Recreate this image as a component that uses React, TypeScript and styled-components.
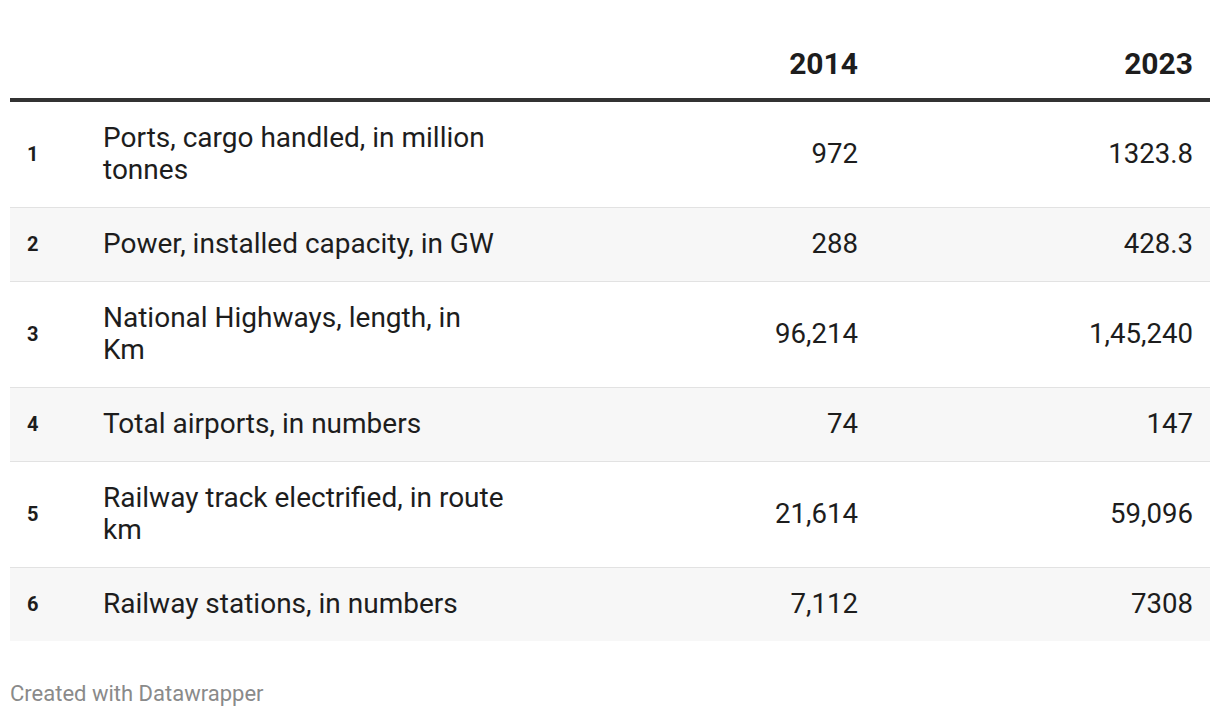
import { FC } from 'react';
import styled, { createGlobalStyle } from 'styled-components';

const GlobalStyle = createGlobalStyle`
  html, body {
    margin: 0;
    padding: 0;
    background: #ffffff;
  }
  body {
    font-family: Roboto, 'Liberation Sans', sans-serif;
    color: #1d1d1d;
  }
`;

const Wrapper = styled.div`
  width: 1200px;
  padding: 0 10px;
`;

const Table = styled.table`
  width: 100%;
  border-collapse: collapse;
  table-layout: fixed;
`;

const HeadCell = styled.th<{ $align?: 'left' | 'right'; $w: number }>`
  width: ${(p) => p.$w}px;
  height: 100px;
  box-sizing: border-box;
  padding: 0 17px 14px 0;
  vertical-align: bottom;
  text-align: ${(p) => p.$align ?? 'right'};
  font-size: 30px;
  font-weight: 700;
  line-height: 40px;
  color: #1d1d1d;
  border-bottom: 4px solid #333333;
`;

const Row = styled.tr<{ $striped: boolean }>`
  background: ${(p) => (p.$striped ? '#f7f7f7' : '#ffffff')};
  border-bottom: 1px solid #e2e2e2;

  &:last-child {
    border-bottom: none;
  }
`;

const RankCell = styled.td`
  padding: 20px 0 21px 17px;
  font-size: 20px;
  font-weight: 700;
  line-height: 32px;
  vertical-align: middle;
`;

const LabelCell = styled.td`
  padding: 20px 0 21px;
  font-size: 28px;
  line-height: 32px;
  vertical-align: middle;
`;

const Label = styled.div`
  max-width: 403px;
`;

const NumCell = styled.td`
  padding: 20px 17px 21px 0;
  font-size: 27.6px;
  line-height: 32px;
  text-align: right;
  vertical-align: middle;
`;

const Footer = styled.div`
  margin-top: 40px;
  font-size: 22px;
  color: #8a8a8a;
`;

type Item = {
  label: string;
  y2014: string;
  y2023: string;
};

const items: Item[] = [
  { label: 'Ports, cargo handled, in million tonnes', y2014: '972', y2023: '1323.8' },
  { label: 'Power, installed capacity, in GW', y2014: '288', y2023: '428.3' },
  { label: 'National Highways, length, in Km', y2014: '96,214', y2023: '1,45,240' },
  { label: 'Total airports, in numbers', y2014: '74', y2023: '147' },
  { label: 'Railway track electrified, in route km', y2014: '21,614', y2023: '59,096' },
  { label: 'Railway stations, in numbers', y2014: '7,112', y2023: '7308' },
];

const App: FC = () => {
  return (
    <>
      <GlobalStyle />
      <Wrapper>
        <Table>
          <thead>
            <tr>
              <HeadCell $w={93} $align="left" />
              <HeadCell $w={410} $align="left" />
              <HeadCell $w={362}>2014</HeadCell>
              <HeadCell $w={335}>2023</HeadCell>
            </tr>
          </thead>
          <tbody>
            {items.map((item, i) => (
              <Row key={item.label} $striped={i % 2 === 1}>
                <RankCell>{i + 1}</RankCell>
                <LabelCell>
                  <Label>{item.label}</Label>
                </LabelCell>
                <NumCell>{item.y2014}</NumCell>
                <NumCell>{item.y2023}</NumCell>
              </Row>
            ))}
          </tbody>
        </Table>
        <Footer>Created with Datawrapper</Footer>
      </Wrapper>
    </>
  );
};

export default App;
